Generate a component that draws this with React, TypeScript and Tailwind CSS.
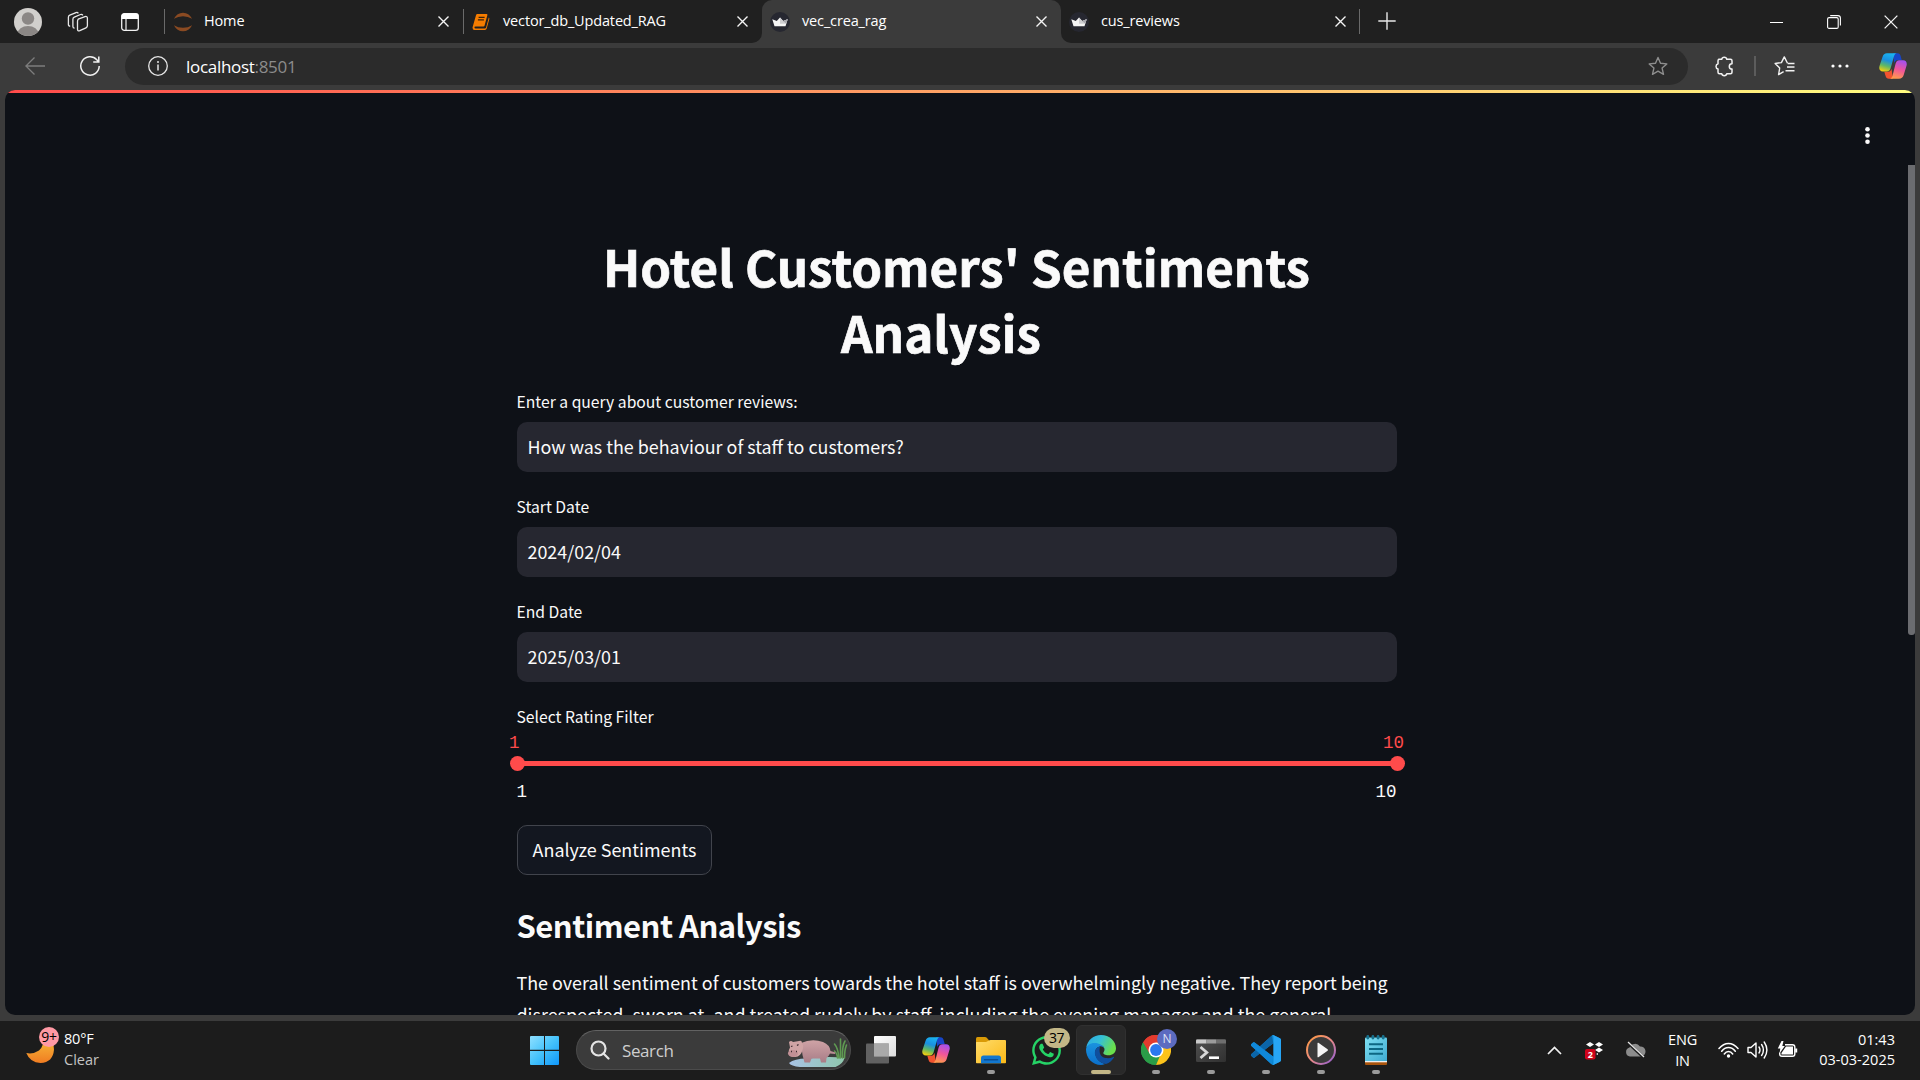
import type { ReactNode } from "react";
import { FaWhatsapp } from "react-icons/fa";

const SANS = "font-['Open_Sans',sans-serif]";
const BODY = "font-['Noto_Sans_CJK_SC',sans-serif]";
const MONO = "font-['Liberation_Mono',monospace]";

/* ---------- Icons ---------- */

function Avatar() {
  return (
    <svg width="28" height="28" viewBox="0 0 28 28">
      <defs>
        <clipPath id="av"><circle cx="14" cy="14" r="14" /></clipPath>
      </defs>
      <circle cx="14" cy="14" r="14" fill="#d1cfcc" />
      <g clipPath="url(#av)" fill="#8b8785">
        <circle cx="14" cy="10.5" r="6.2" />
        <ellipse cx="14" cy="26" rx="10.5" ry="8" />
      </g>
    </svg>
  );
}

function Workspaces() {
  return (
    <svg width="22" height="22" viewBox="0 0 22 22" fill="none" stroke="#e8e8e8" strokeWidth="1.3" strokeLinejoin="round">
      <path d="M11.2 8.2 18 5.6q2.4-.6 2.4 1.6v7.6q0 1.4-1.4 2l-6.2 2.9q-2.3.7-2.3-1.4v-7.8q0-1.6.7-2.3z" />
      <path d="M7.6 17.2q-1.7 0-1.7-1.7V8.2q0-1.5 1.4-2.1l6.2-2.6q1.6-.5 2.3.9" />
      <path d="M3.2 15.2q-1.8 0-1.8-1.8V6.3q0-1.5 1.4-2.1L9 1.6q1.6-.5 2.3.7" />
    </svg>
  );
}

function TabActions() {
  return (
    <svg width="18" height="18" viewBox="0 0 18 18" fill="none">
      <rect x=".7" y=".7" width="16.6" height="16.6" rx="2.6" stroke="#f2f2f2" strokeWidth="1.3" />
      <path d="M.5 6V3Q.5.5 3 .5h12q2.5 0 2.5 2.5v3z" fill="#fff" />
      <path d="M5 6v11.3" stroke="#f2f2f2" strokeWidth="1.2" />
    </svg>
  );
}

function Jupyter() {
  return (
    <svg className="translate-x-px" width="20" height="20" viewBox="0 0 20 20" fill="#8a4a22">
      <path d="M.9 6.8Q4 .8 10 .8t9.1 6Q15 4.200 10 4.200T.9 6.800z" />
      <path d="M.9 13.200Q4 19.200 10 19.200t9.100-6Q15 15.800 10 15.800T.9 13.200z" />
    </svg>
  );
}

function NotebookIcon() {
  return (
    <svg width="18" height="18" viewBox="0 0 18 18">
      <path d="M5.300 1H14.600q1 0 .8 1L12.600 12.500q-.2 1-1.200 1H3.500q-1.400 0-1 1.200.2.700 1 .7h9.300q1 0 1.300-1L16.800 4.500q.7.600.5 1.400L14.700 15.600q-.4 1.400-1.800 1.400H2.500Q.5 17 .5 14.500L4 2.200Q4.300 1 5.300 1z" fill="#f57c00" />
      <path d="M6.600 4.300h6M5.900 6.800h6" stroke="#3a2008" strokeWidth="1.200" />
    </svg>
  );
}

function Crown() {
  return (
    <svg width="20" height="20" viewBox="0 0 20 20">
      <circle cx="10" cy="10" r="10" fill="#262730" />
      <path d="M2.300 7.200 6.800 9 10 5.600l3.200 3.400 4.500-1.800-2.200 7H4.500z" fill="#f5f5f5" />
      <path d="M10 5.600l3.200 3.400 4.500-1.800-2.200 4.500H10z" fill="#cfcfd2" />
      <path d="M13.200 9l4.500-1.800-1.500 4.500z" fill="#a8a8ae" />
    </svg>
  );
}

function Cross({ size = 11, w = 1.4 }: { size?: number; w?: number }) {
  return (
    <svg width={size} height={size} viewBox="0 0 11 11" stroke="#f5f5f5" strokeWidth={w}>
      <path d="M.5.5l10 10M10.500.5l-10 10" />
    </svg>
  );
}

function Copilot({ id }: { id: string }) {
  return (
    <svg width="28" height="26" viewBox="0 0 28 26">
      <defs>
        <linearGradient id={id + "a"} x1="0.6" y1="0" x2="0.300" y2="1">
          <stop offset="0" stopColor="#1ab4f0" />
          <stop offset=".4" stopColor="#1a8fe0" />
          <stop offset=".7" stopColor="#5fb865" />
          <stop offset="1" stopColor="#f2cf10" />
        </linearGradient>
        <linearGradient id={id + "b"} x1="0.700" y1="0" x2="0.400" y2="1">
          <stop offset="0" stopColor="#a350f0" />
          <stop offset=".5" stopColor="#f0559b" />
          <stop offset="1" stopColor="#ff9a4d" />
        </linearGradient>
      </defs>
      <path d="M14 .3h4.500c2 0 2.700 1.300 3.200 3l1 3.700h-3.500c-2.500 0-3.500 1.500-4 3z" fill="#1745c8" />
      <path d="M14 25.700H10c-2 0-3-1.300-3.500-3L5.300 18.700H9c2.500 0 3-1.500 3.500-3z" fill="#f2532f" />
      <path d="M8 .3h10c-1.800 0-2.500 1.500-3 3l-3.300 11.700c-.700 2.300-1.500 3.500-4 3.500H4C.700 18.500-.3 16 .500 13L3.500 4C4.300 1.600 5.600.3 8 .3z" fill={`url(#${id}a)`} />
      <path d="M20 25.700H10.500c1.800 0 2.500-1.500 3-3l3-11.700c.700-2.300 1.500-3.700 4-3.700H24c3.300 0 4.300 2.500 3.500 5.500l-2.800 9.200c-.9 2.500-2.300 3.700-4.700 3.700z" fill={`url(#${id}b)`} />
    </svg>
  );
}

function StarPath() {
  return <path d="M10 1.500l2.500 5.700 6.300.7-4.700 4.200 1.400 6.200L10 15.200l-5.500 3.100 1.400-6.200L1.200 7.900l6.300-.7z" />;
}

function Hippo() {
  return (
    <svg width="62" height="32" viewBox="0 0 62 32">
      <defs>
        <linearGradient id="hp" x1="0" y1="0" x2="0" y2="1">
          <stop offset="0" stopColor="#cfa3a6" />
          <stop offset="1" stopColor="#a97d87" />
        </linearGradient>
        <linearGradient id="wt" x1="0" y1="0" x2="1" y2="0">
          <stop offset="0" stopColor="#a9c3e6" />
          <stop offset="1" stopColor="#8fc7ad" />
        </linearGradient>
      </defs>
      <path d="M3 27q6-5 20-4.500Q42 20 58.500 22q-1.500 6-9 9H14Q5 30 3 27z" fill="url(#wt)" />
      <g stroke="#5f9a52" strokeWidth="1.600" fill="none" strokeLinecap="round">
        <path d="M53 22Q52 12 48.500 8M54.500 22V3M56.500 22Q56 10 59 5M51.500 22q-.5-5-3-7M58.500 22q0-8 2-13" />
      </g>
      <path d="M15 7Q26 2 37 6q7 3 7.500 9l5 1.500-.5 1.500-5-.5q-1.500 3-3.500 4.500L40 26.500h-5L34 22.500H25.500L24 26.500h-5.500L16.500 19z" fill="url(#hp)" />
      <path d="M3 6q2-2 4 0l6-1q3-1 3 2 2 3 .5 7Q15 20.500 9 21q-6 0-6.500-4 0-3 1.500-5.500z" fill="#d0a4a5" />
      <ellipse cx="7" cy="17.500" rx="5" ry="3.500" fill="#c08f95" />
      <path d="M5 10.500l1.500-.5M11 9.500l1.500-1M5 15.500h1M10 15.500h1" stroke="#3b2b30" strokeWidth="1.300" />
    </svg>
  );
}

function Folder() {
  return (
    <svg width="30" height="28" viewBox="0 0 30 28">
      <defs>
        <linearGradient id="fd" x1="0" y1="0" x2="1" y2="1">
          <stop offset="0" stopColor="#ffdc6b" />
          <stop offset="1" stopColor="#fbb917" />
        </linearGradient>
      </defs>
      <path d="M0 8V2.500Q0 1 1.500 1H9q1 0 1.800.8L13.500 5v3z" fill="#d99a06" />
      <path d="M0 6.500q0-.5.5-.5H10l3-1.500Q13.500 4 14.500 4H29q1 0 1 1v21.500q0 .8-.8.8H.8q-.8 0-.8-.8z" fill="url(#fd)" />
      <path d="M5 27.300V22q0-2.500 2.500-2.500h15Q25 19.500 25 22v5.300z" fill="#1277cf" />
      <path d="M8.500 23.700h13" stroke="#0a4f96" strokeWidth="1.500" strokeLinecap="round" />
    </svg>
  );
}

function Edge() {
  return (
    <svg width="30" height="30" viewBox="0 0 30 30">
      <defs>
        <linearGradient id="eg1" x1="0" y1="0" x2="1" y2=".4">
          <stop offset="0" stopColor="#2aa8e8" />
          <stop offset=".5" stopColor="#36c0d5" />
          <stop offset="1" stopColor="#6ae04c" />
        </linearGradient>
        <linearGradient id="eg2" x1="0" y1="0" x2="0" y2="1">
          <stop offset="0" stopColor="#1a93df" />
          <stop offset="1" stopColor="#0b6fcb" />
        </linearGradient>
      </defs>
      <path d="M.3 12.500C1.500 5 7.500 0 15 0c8.500 0 15 6.300 15 13.200 0 4.500-3.500 7-7.500 7-3.800 0-5.200-1.300-5.200-2.200 0-.8 1.200-1.500 1.200-3.600 0-2.500-2.500-5-7-5C6 9.400 1.500 11 .3 12.500z" fill="url(#eg1)" />
      <path d="M0 14.500C.3 10.500 4 8 8.500 8c5 0 9 2.500 10 6-.5-1.500-2.500-3-4.800-2.600C10 12 8.500 16 9.500 20c1.200 5 5.500 7.800 9.500 9-1.300.6-2.700 1-4 1C6.500 30 0 23 0 14.500z" fill="url(#eg2)" />
      <path d="M14 11.400C9.500 12.500 8.200 16.300 9.200 20c1.300 5 5.500 8.200 10.800 9 3.500-1.200 6.200-3.500 8-6.500.3-.6-.2-.9-.7-.6-2.500 1.200-5 1.500-7.300 1.100-5-.8-7.500-4.500-6-11.600z" fill="#0f4f9e" />
    </svg>
  );
}

function Chrome() {
  return (
    <svg width="30" height="30" viewBox="0 0 30 30">
      <path d="M15 15 2 7.500A15 15 0 0 1 28 7.500z" fill="#e33b2e" />
      <path d="M15 15 2 7.500A15 15 0 0 0 15 30l6.500-11.200z" fill="#2a9d48" />
      <path d="M15 15h6.500L15 30A15 15 0 0 0 28 7.500H15z" fill="#fcc31b" />
      <path d="M2 7.500 8.500 18.800 15 7.500h13A15 15 0 0 0 2 7.500z" fill="#e33b2e" />
      <path d="M2 7.500 8.500 18.800 15 30A15 15 0 0 1 2 7.500z" fill="#2a9d48" />
      <circle cx="15" cy="15" r="7.500" fill="#fff" />
      <circle cx="15" cy="15" r="5.900" fill="#2b78ee" />
    </svg>
  );
}

function Terminal() {
  return (
    <svg width="30" height="23" viewBox="0 0 30 23">
      <defs>
        <linearGradient id="tm" x1="0" y1="0" x2="1" y2="1">
          <stop offset="0" stopColor="#505050" />
          <stop offset="1" stopColor="#303030" />
        </linearGradient>
      </defs>
      <rect width="30" height="23" rx="1.500" fill="url(#tm)" />
      <path d="M0 1.500Q0 .5 1 .5h9.500V4.500H0z" fill="#c9c9c9" />
      <path d="M10.500.5H20v4h-9.500z" fill="#9b9b9b" />
      <path d="M20 .5h9q1 0 1 1v3H20z" fill="#6e6e6e" />
      <path d="M4.500 8l6.300 5.500L4.500 19" stroke="#d8d8d8" strokeWidth="2.800" fill="none" />
      <path d="M13 18.700h10" stroke="#fff" strokeWidth="2.600" />
    </svg>
  );
}

function VsCode() {
  return (
    <svg width="30" height="30" viewBox="0 0 24 24">
      <path fill="#0a86d0" d="M23.150 2.587L18.210.21a1.494 1.494 0 0 0-1.705.29l-9.460 8.630-4.120-3.128a.999.999 0 0 0-1.276.057L.327 7.261A1 1 0 0 0 .326 8.740L3.899 12 .326 15.260a1 1 0 0 0 .001 1.479L1.650 17.940a.999.999 0 0 0 1.276.057l4.120-3.128 9.460 8.630a1.492 1.492 0 0 0 1.704.290l4.942-2.377A1.500 1.500 0 0 0 24 20.060V3.939a1.500 1.500 0 0 0-.850-1.352zm-5.146 14.861L10.826 12l7.178-5.448v10.896z" />
      <path fill="#0b65a8" d="M.327 15.260 16.500.5l1.500 6.050L2.926 18q-.7.500-1.276-.06L.327 16.740q-.7-.74 0-1.480z" />
      <path fill="#1088d8" d="M.327 8.740 16.500 23.500l1.500-6.050L2.926 6q-.7-.500-1.276.06L.327 7.260q-.7.740 0 1.480z" />
      <path fill="#27a5f5" d="M17 .3q.5-.3 1.210-.09l4.940 2.377q.85.500.85 1.352V20.060q0 .9-.85 1.352L18.210 23.790q-.7.300-1.300-.1 1.090.2 1.090-1.200V1.500Q18 .3 17 .3z" />
    </svg>
  );
}

function MediaPlayer() {
  return (
    <svg width="30" height="30" viewBox="0 0 30 30">
      <defs>
        <linearGradient id="mp" x1="0" y1="0" x2="1" y2="1">
          <stop offset="0" stopColor="#ff9a3c" />
          <stop offset=".5" stopColor="#e88a86" />
          <stop offset="1" stopColor="#8d5bd8" />
        </linearGradient>
      </defs>
      <circle cx="15" cy="15" r="14" fill="#3a3a3a" stroke="url(#mp)" strokeWidth="2" />
      <path d="M11.500 8.300q0-1 .9-.5l9.200 6.500q.8.700 0 1.400l-9.200 6.500q-.9.500-.9-.5z" fill="#f5f5f5" />
    </svg>
  );
}

function Notepad() {
  return (
    <svg width="22" height="30" viewBox="0 0 22 30">
      <defs>
        <linearGradient id="np" x1="0" y1="0" x2="1" y2="1">
          <stop offset="0" stopColor="#7fe0f2" />
          <stop offset="1" stopColor="#3fabd2" />
        </linearGradient>
      </defs>
      <path d="M0 26h22v3q0 1-1 1H1q-1 0-1-1z" fill="#a9540c" />
      <path d="M0 24h22v3.300H0z" fill="#eeeeee" />
      <path d="M0 3.500Q0 2.500 1 2.500h20q1 0 1 1V26H0z" fill="url(#np)" />
      <path d="M4 9.300h14M4 14h14M4 18.800h14" stroke="#0d6783" strokeWidth="2" />
      <g fill="#17728f">
        {[2.8, 7.9, 13.1, 18.2].map((x) => (
          <rect key={x} x={x - 1.4} y="0" width="2.800" height="4.500" rx="1.400" />
        ))}
      </g>
    </svg>
  );
}

/* ---------- Browser chrome ---------- */

function Tab({ title, icon, active, divider, flare }: { title: string; icon: ReactNode; active?: boolean; divider?: boolean; flare?: string }) {
  const body = (
    <div className={`flex h-[43px] w-full items-center ${active ? "rounded-t-[10px] bg-[#3b3b3b]" : "bg-[#202020]"} ${flare ?? ""}`}>
      <div className={`h-[25px] w-px ${divider ? "bg-[#6a6a6a]" : "bg-transparent"}`} />
      <div className="ml-[7px] flex w-5 justify-center">{icon}</div>
      <div className={`ml-[12px] flex-1 whitespace-nowrap pb-[2px] text-[14.5px] leading-5 tracking-[-0.15px] text-white ${SANS}`}>{title}</div>
      <div className="mr-[14px]"><Cross /></div>
    </div>
  );
  return <div className={`w-[299px] ${active ? "bg-[#202020]" : "bg-[#3b3b3b]"}`}>{body}</div>;
}

function TabStrip() {
  return (
    <div className="flex h-[43px] bg-[#202020]">
      <div className="flex w-[164px] items-center">
        <div className="ml-[14px]"><Avatar /></div>
        <div className="ml-[25px]"><Workspaces /></div>
        <div className="ml-[32px]"><TabActions /></div>
      </div>
      <Tab title="Home" divider icon={<Jupyter />} />
      <Tab title="vector_db_Updated_RAG" divider flare="rounded-br-[10px]" icon={<NotebookIcon />} />
      <Tab title="vec_crea_rag" active icon={<Crown />} />
      <Tab title="cus_reviews" flare="rounded-bl-[10px]" icon={<Crown />} />
      <div className="flex flex-1 items-center">
        <div className="-ml-px h-[25px] w-px bg-[#6a6a6a]" />
        <svg className="ml-[18px] mb-px" width="18" height="18" viewBox="0 0 18 18" stroke="#e8e8e8" strokeWidth="1.400">
          <path d="M9 .3v17.400M.3 9h17.400" />
        </svg>
        <svg className="ml-auto" width="13" height="14" viewBox="0 0 13 14" stroke="#fff">
          <path d="M0 7.500h13" />
        </svg>
        <svg className="ml-[44px]" width="14" height="14" viewBox="0 0 14 14" fill="none" stroke="#fff" strokeWidth="1.100">
          <rect x=".6" y="2.600" width="10.600" height="10.800" rx="1.500" />
          <path d="M3.200.6h7.700q2.500 0 2.500 2.500v7.500" />
        </svg>
        <div className="ml-[43px] mr-[22px]"><Cross size={14} w={1} /></div>
      </div>
    </div>
  );
}

function Toolbar() {
  return (
    <div className="flex h-[47px] items-center bg-[#3b3b3b] pb-px">
      <svg className="ml-[25px]" width="20" height="18" viewBox="0 0 20 18" fill="none" stroke="#7d7d7d" strokeWidth="1.300">
        <path d="M20 9H.9M9.500.5.9 9l8.600 8.500" />
      </svg>
      <svg className="ml-[35px]" width="20" height="20" viewBox="0 0 20 20" fill="none" stroke="#f2f2f2" strokeWidth="1.500">
        <path d="M19.200 10a9.200 9.200 0 1 1-2.400-6.200l1.700 1.900M18.800.5v5.400h-5.600" />
      </svg>
      <div className="ml-[25px] flex h-[37px] w-[1563px] items-center rounded-full bg-[#2b2b2b]">
        <svg className="ml-[23px]" width="20" height="20" viewBox="0 0 20 20" fill="none" stroke="#e6e6e6" strokeWidth="1.300">
          <circle cx="10" cy="10" r="9.300" />
          <path d="M10 8.600v6" strokeWidth="1.500" />
          <circle cx="10" cy="5.900" r="1" fill="#e6e6e6" stroke="none" />
        </svg>
        <div className={`ml-[18px] pt-px text-[17px] leading-6 tracking-[-0.3px] text-white ${SANS}`}>
          localhost<span className="text-[#8c8c8c]">:8501</span>
        </div>
        <svg className="ml-auto mr-[20px]" width="20" height="20" viewBox="0 0 20 20" fill="none" stroke="#8e8e8e" strokeWidth="1.400" strokeLinejoin="round">
          <StarPath />
        </svg>
      </div>
      <svg className="ml-[26px]" width="20" height="21" viewBox="0 0 20 21" fill="none" stroke="#f2f2f2" strokeWidth="1.500" strokeLinejoin="round">
        <path d="M4.300 3.300H7.700a2.600 2.600 0 0 1 5.100 0h3.700q1.500 0 1.500 1.500V7.700a2.700 2.700 0 1 0 0 5.400v3.100q0 1.500-1.500 1.500h-3.700a2.600 2.600 0 0 1-5.100 0H5.500Q4 17.700 4 16.200V13a2.700 2.700 0 0 1 0-5.200V4.800q0-1.500 1.500-1.500" />
      </svg>
      <div className="ml-[20px] h-5 w-[2px] bg-[#5c5c5c]" />
      <svg className="ml-[18px]" width="22" height="20" viewBox="0 0 22 20" fill="none" stroke="#f2f2f2" strokeWidth="1.400" strokeLinejoin="round">
        <path d="M13.500 7.300 10.300.9 7.400 6.600l-6.300.9 4.600 4.500-1.100 6.600 5-2.900M13.700 7.500h6.800M13 11h7.500M11.500 14.700h9" />
      </svg>
      <svg className="ml-[35px]" width="18" height="4" viewBox="0 0 18 4" fill="#fff">
        <circle cx="2" cy="2" r="1.600" /><circle cx="9" cy="2" r="1.600" /><circle cx="16" cy="2" r="1.600" />
      </svg>
      <div className="ml-[30px]"><Copilot id="c1" /></div>
    </div>
  );
}

/* ---------- Page ---------- */

function Field({ label, value }: { label: string; value: string }) {
  return (
    <div className="mb-[21px]">
      <div className="mb-[6px] text-[15.7px] leading-7">{label}</div>
      <div className="flex h-[50px] items-center rounded-[10px] bg-[#262730] px-[11px] pb-px text-[17.9px]">{value}</div>
    </div>
  );
}

function Page() {
  return (
    <div className={`flex h-[925px] overflow-hidden rounded-[10px] bg-[#0e1117] text-[#fafafa] ${BODY}`}>
      <div className="flex w-[1903px] flex-col">
        <div className="h-[3px] w-[1910px] shrink-0 bg-linear-to-r/srgb from-[#ff4b4b] to-[#fffd80]" />
        <div className="flex h-[140px] shrink-0 justify-end">
          <svg className="mr-[38px] mt-[33px]" width="5" height="19" viewBox="0 0 5 19" fill="#fafafa">
            <circle cx="2.500" cy="3.200" r="2.300" /><circle cx="2.500" cy="9.500" r="2.300" /><circle cx="2.500" cy="15.800" r="2.300" />
          </svg>
        </div>
        <div className="mx-auto w-[880px]">
          <h1 className="whitespace-nowrap text-center text-[49.300px] font-bold leading-[66px] [-webkit-text-stroke:0.7px_#fafafa]">
            Hotel Customers' Sentiments
            <span className="block pr-[31px]">Analysis</span>
          </h1>
          <div className="pt-[23px]">
            <Field label="Enter a query about customer reviews:" value="How was the behaviour of staff to customers?" />
            <Field label="Start Date" value="2024/02/04" />
            <Field label="End Date" value="2025/03/01" />
          </div>
          <div className="text-[15.7px] leading-7">Select Rating Filter</div>
          <div className={`-mx-[7.5px] mt-[2px] flex justify-between text-[17.5px] leading-5 text-[#ff4b4b] ${MONO}`}>
            <span>1</span><span>10</span>
          </div>
          <div className="mt-2 flex h-[5px] items-center justify-between bg-[#ff4b4b]">
            <div className="-ml-[7px] size-[15px] rounded-full bg-[#ff4b4b]" />
            <div className="-mr-[8px] size-[15px] rounded-full bg-[#ff4b4b]" />
          </div>
          <div className={`mt-4 flex justify-between text-[17.5px] leading-5 ${MONO}`}>
            <span>1</span><span>10</span>
          </div>
          <button className="mt-[23px] flex h-[50px] w-[195px] items-center justify-center rounded-[10px] border border-[#41444c] bg-[#131720] pb-px pl-px text-[17.95px]">
            Analyze Sentiments
          </button>
          <h3 className="mt-[29px] text-[31px] font-bold leading-[42px] tracking-[-0.5px]">Sentiment Analysis</h3>
          <p className="mt-[20px] whitespace-nowrap text-[17.92px] leading-8">
            The overall sentiment of customers towards the hotel staff is overwhelmingly negative. They report being
            <br />
            disrespected, sworn at, and treated rudely by staff, including the evening manager and the general
          </p>
        </div>
      </div>
      <div className="mt-[75px] h-[470px] w-[7px] rounded-b-[3px] bg-[#6b6c70]" />
    </div>
  );
}

/* ---------- Taskbar ---------- */

function Slot({ children, dot }: { children: ReactNode; dot?: boolean }) {
  return (
    <div className="flex h-[50px] w-[55px] flex-col items-center">
      <div className="mt-[9px] flex h-8 items-center">{children}</div>
      <div className={`mt-1 h-1 w-2 rounded-full ${dot ? "bg-[#9a9a9a]" : "bg-transparent"}`} />
    </div>
  );
}

function Taskbar() {
  return (
    <div className={`flex h-[59px] items-start bg-[#1c1c1c] pt-1 text-[14.5px] leading-5 text-white ${SANS}`}>
      <div className="flex w-[530px]">
        <div className="relative ml-[26px] mt-[2px] h-[38px] w-[33px]">
          <svg className="absolute left-0 top-[9px]" width="29" height="28" viewBox="0 0 29 28">
            <defs>
              <linearGradient id="mn" x1="0" y1="0" x2="0" y2="1">
                <stop offset="0" stopColor="#f8c33c" />
                <stop offset="1" stopColor="#f07c22" />
              </linearGradient>
            </defs>
            <path d="M18 0q10 3 10 13.500Q27 26.500 14.500 27 4 26.500.3 17 7 18.500 13 14.500 18.500 9.500 18 0z" fill="url(#mn)" />
          </svg>
          <div className="absolute left-[13px] top-0 flex size-5 items-center justify-center rounded-full bg-[#ff99a4] text-[14px] tracking-[-0.3px] text-black">9+</div>
        </div>
        <div className="ml-[5px] mt-[4px]">
          <div className="tracking-[-0.2px]">80°F</div>
          <div className="pt-px text-[#c4c4c4]">Clear</div>
        </div>
      </div>
      <svg className="mt-[11px]" width="29" height="29" viewBox="0 0 29 29">
        <defs>
          <linearGradient id="wn" x1="0" y1="0" x2="29" y2="29" gradientUnits="userSpaceOnUse">
            <stop offset="0" stopColor="#8fe0ff" />
            <stop offset=".5" stopColor="#45c2fb" />
            <stop offset="1" stopColor="#0f97fb" />
          </linearGradient>
        </defs>
        <path fill="url(#wn)" d="M1 0h13v13.800H0V1Q0 0 1 0zM15 0h13q1 0 1 1v12.800H15zM0 15h14v14H1q-1 0-1-1zM15 15h14v13q0 1-1 1H15z" />
      </svg>
      <div className="ml-[17px] mt-[5px] flex h-10 w-[275px] items-center overflow-hidden rounded-full border border-[#4b4b4b] border-t-[#626262] bg-[#3b3b3b]">
        <svg className="ml-[13px]" width="20" height="20" viewBox="0 0 20 20" fill="none" stroke="#e4e4e4" strokeWidth="2.200">
          <circle cx="8.500" cy="8.500" r="7" fill="#4c4c4c" />
          <path d="M13.500 13.500l5 5" strokeLinecap="round" />
        </svg>
        <span className="ml-[12px] pt-px text-[17px] leading-6 tracking-[-0.4px] text-[#cfcfcf]">Search</span>
        <div className="ml-auto mr-[2px] mt-1"><Hippo /></div>
      </div>
      <div className="ml-[2.5px] flex">
        <Slot>
          <svg width="30" height="28" viewBox="0 0 30 28">
            <defs>
              <linearGradient id="tv" x1="0" y1="0" x2="1" y2="1">
                <stop offset="0" stopColor="#fff" />
                <stop offset="1" stopColor="#dcdcdc" />
              </linearGradient>
            </defs>
            <rect x="8" y="0" width="22" height="20.500" rx="1" fill="url(#tv)" />
            <rect x="0" y="7.500" width="23" height="20" rx="1" fill="#6d6d6d" opacity=".85" />
            <rect x="8" y="7.500" width="15" height="13" fill="#a9a9a9" />
          </svg>
        </Slot>
        <Slot><Copilot id="c2" /></Slot>
        <Slot dot><Folder /></Slot>
        <Slot>
          <div className="relative">
            <FaWhatsapp size={33} color="#25d366" />
            <div className="absolute -top-[6px] left-[14px] flex h-5 w-[26px] items-center justify-center rounded-full bg-[#c3b787] text-[14px] tracking-[-0.5px] text-black">37</div>
          </div>
        </Slot>
        <div className="mx-[2.5px] flex h-[50px] w-[50px] flex-col items-center rounded-[6px] border border-[#303030] bg-[#292929]">
          <div className="mt-[9px]"><Edge /></div>
          <div className="mt-[5px] h-1 w-5 rounded-full bg-[#c3b787]" />
        </div>
        <Slot dot>
          <div className="relative">
            <Chrome />
            <div className="absolute -top-[6px] left-[16px] flex size-[20px] items-center justify-center rounded-full bg-[#5c6bc0] text-[12px] text-[#dfe2f5]">N</div>
          </div>
        </Slot>
        <Slot dot><Terminal /></Slot>
        <Slot dot><VsCode /></Slot>
        <Slot dot><MediaPlayer /></Slot>
        <Slot dot><Notepad /></Slot>
      </div>
      <div className="ml-auto mr-[25px] flex h-[50px] items-center">
        <svg className="mr-[22px]" width="15" height="9" viewBox="0 0 15 9" fill="none" stroke="#f2f2f2" strokeWidth="1.700">
          <path d="M1 8l6.500-6.500L14 8" />
        </svg>
        <svg className="mr-[21px]" width="20" height="19" viewBox="0 0 20 19">
          <g fill="#fff">
            <path d="M6 1l4 2.500L6 6 2 3.500zM15 1l4 2.500L15 6l-4-2.500zM15 6.500l4 2.500-4 2.500L11 9zM12 13l2-1v2z" />
          </g>
          <rect x="1" y="8" width="10.500" height="10.500" rx="2" fill="#d0021b" />
          <text x="6.250" y="16.500" fontSize="9" fontWeight="700" fill="#fff" textAnchor="middle">2</text>
        </svg>
        <svg className="mr-[22px]" width="21" height="18" viewBox="0 0 21 18">
          <path d="M5 15.500a4.600 4.600 0 0 1-.5-9A6 6 0 0 1 15 5.500a5 5 0 0 1 1 10z" fill="#8c8c8c" />
          <path d="M2.500 1.500l16 15" stroke="#1c1c1c" strokeWidth="2.500" />
          <path d="M3 1l16 15" stroke="#e8e8e8" strokeWidth="1.200" />
        </svg>
        <div className="mr-[21px] text-center tracking-[-0.1px]">
          <div>ENG</div>
          <div className="pt-px">IN</div>
        </div>
        <svg className="mr-[8px]" width="21" height="17" viewBox="0 0 21 17" fill="none" stroke="#fff" strokeWidth="1.500" strokeLinecap="round">
          <path d="M1 6.500Q5.300 1.500 10.500 1.500T20 6.500M3.700 9.300Q6.500 5.500 10.500 5.500t6.800 3.800M6.300 12Q8 9.500 10.500 9.500t4.200 2.500" />
          <circle cx="10.500" cy="14" r="1.700" fill="#fff" stroke="none" />
        </svg>
        <svg className="mr-[9px]" width="21" height="18" viewBox="0 0 21 18" fill="none" stroke="#fff" strokeWidth="1.400" strokeLinejoin="round" strokeLinecap="round">
          <path d="M1 6.500h3L9 2v14l-5-4.500H1zM12 6q2 3 0 6M14.600 3.500q3.600 5.500 0 11M17.200 1q5.400 8 0 16" />
        </svg>
        <svg className="mr-[21px]" width="21" height="18" viewBox="0 0 21 18" fill="none" stroke="#fff" strokeWidth="1.400">
          <path d="M8 3.700h7.500q2.300 0 2.300 2.300v7q0 2.300-2.300 2.300H5q-2.300 0-2.300-2.300v-1.500" />
          <path d="M9 5.500h7v8H4.500V12z" fill="#fff" stroke="none" />
          <path d="M19.200 7.500v4" strokeWidth="2" />
          <path d="M4.500 0 .8 7.500h2.500L2.500 12.500 7.800 5H5.300L6.500 0z" fill="#fff" stroke="none" />
        </svg>
        <div className="text-right tracking-[0.02px]">
          <div>01:43</div>
          <div>03-03-2025</div>
        </div>
      </div>
    </div>
  );
}

export default function App() {
  return (
    <div className="flex h-[1080px] w-[1920px] flex-col overflow-hidden bg-[#3b3b3b]">
      <TabStrip />
      <Toolbar />
      <div className="h-[931px] px-[5px]">
        <Page />
      </div>
      <Taskbar />
    </div>
  );
}
